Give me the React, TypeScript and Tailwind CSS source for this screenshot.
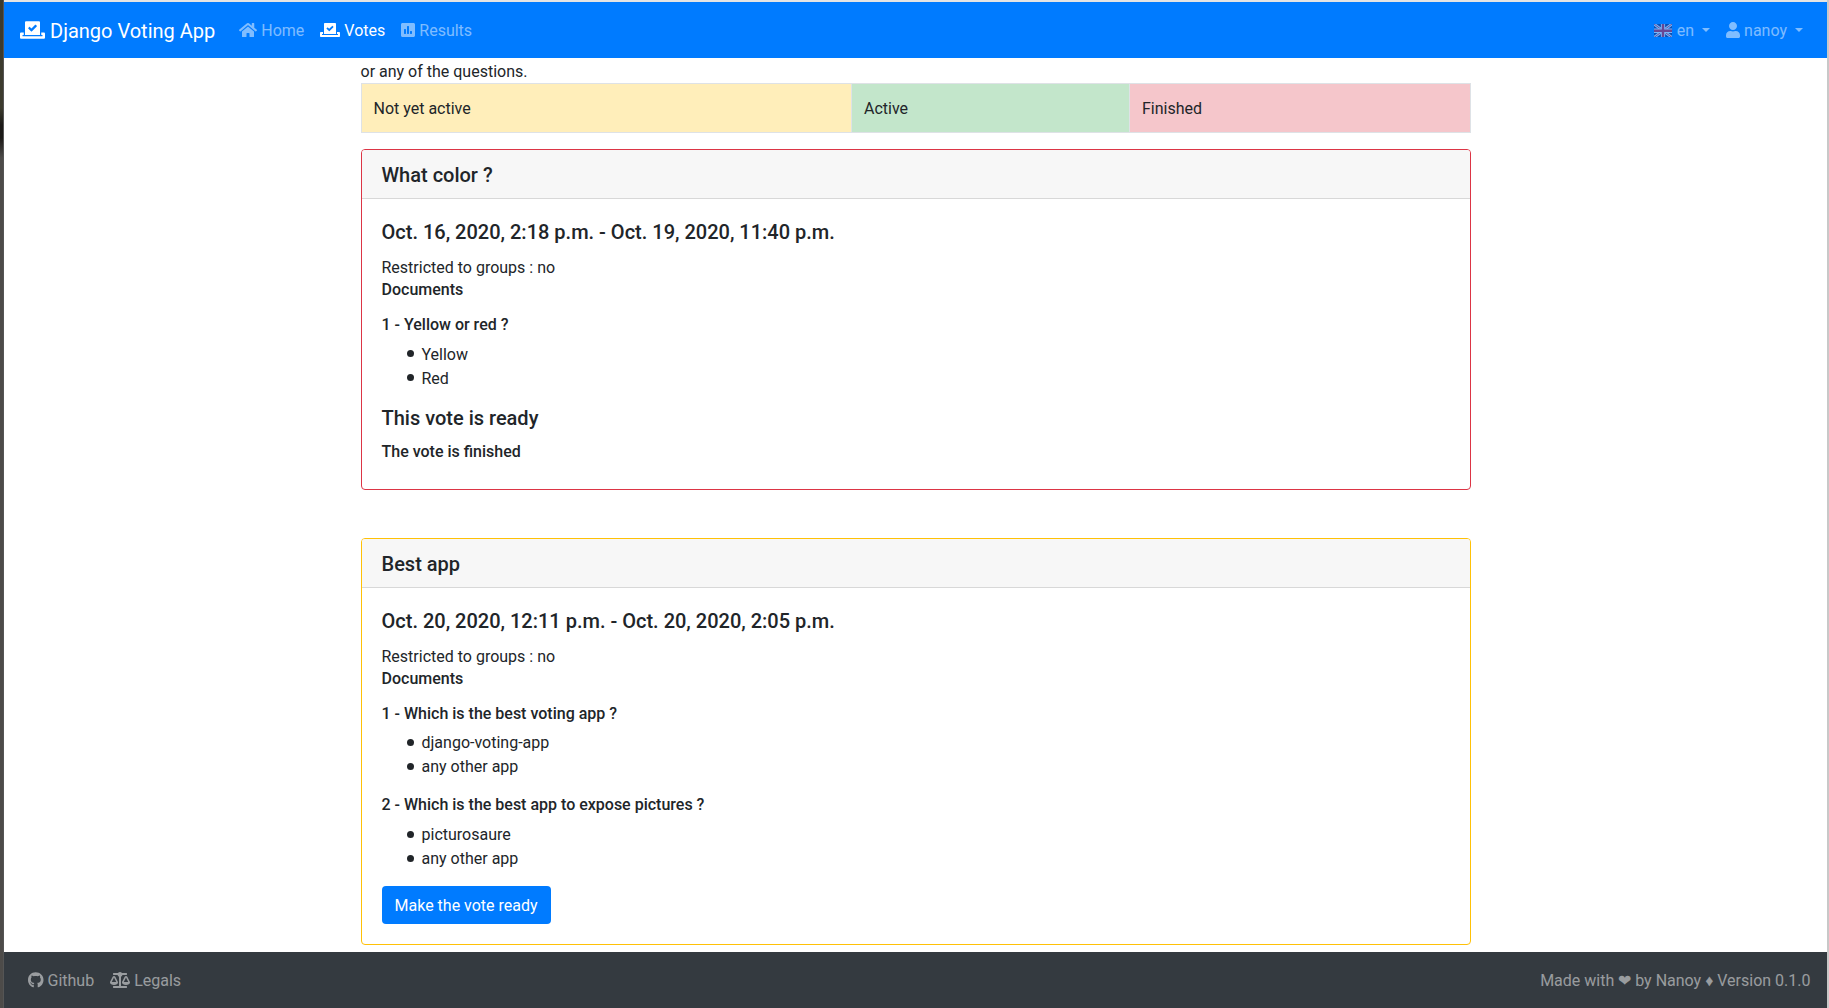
import type { ReactNode } from "react";
import { FaVoteYea, FaHome, FaPoll, FaUser, FaGithub, FaBalanceScale } from "react-icons/fa";

function Caret() {
  return (
    <span className="ml-2 h-0 w-0 border-x-[4.8px] border-t-[4.8px] border-x-transparent border-t-current" />
  );
}

function Flag() {
  return (
    <svg viewBox="0 0 60 44" className="mt-px mr-[5px] h-[13.5px] w-[18px] opacity-50" preserveAspectRatio="none">
      <rect width="60" height="44" fill="#15256b" />
      <path d="M0 0L60 44M60 0L0 44" stroke="#f1f1f1" strokeWidth="9" />
      <path d="M0 0L60 44M60 0L0 44" stroke="#d0142c" strokeWidth="3" />
      <path d="M30 0V44M0 22H60" stroke="#f1f1f1" strokeWidth="14" />
      <path d="M30 0V44M0 22H60" stroke="#d0142c" strokeWidth="8" />
    </svg>
  );
}

function Label({ children }: { children: ReactNode }) {
  return <span className="pt-0.5">{children}</span>;
}

function Navbar() {
  return (
    <nav className="flex h-14 shrink-0 items-center bg-[#007bff] px-4 text-white/50">
      <a className="mr-4 flex items-center text-xl text-white">
        <FaVoteYea className="mr-[5px] h-5 w-[25px]" />
        <Label>Django Voting App</Label>
      </a>
      <a className="flex items-center px-2">
        <FaHome className="mr-1 h-4 w-[18px]" />
        <Label>Home</Label>
      </a>
      <a className="flex items-center px-2 text-white">
        <FaVoteYea className="mr-1 h-4 w-5" />
        <Label>Votes</Label>
      </a>
      <a className="flex items-center px-2">
        <FaPoll className="mr-1 h-4 w-3.5" />
        <Label>Results</Label>
      </a>
      <a className="ml-auto flex items-center px-2">
        <Flag />
        <Label>en</Label>
        <Caret />
      </a>
      <a className="flex items-center px-2">
        <FaUser className="mr-1 h-4 w-3.5" />
        <Label>nanoy</Label>
        <Caret />
      </a>
    </nav>
  );
}

type Question = { title: string; answers: string[]; answerClass: string };

function VoteCard(props: {
  title: string;
  dates: string;
  border: string;
  questions: Question[];
  children: ReactNode;
}) {
  return (
    <section className={`rounded-[4px] border ${props.border}`}>
      <h5 className="rounded-t-[3px] border-b border-[#d8d8d8] bg-[#f7f7f7] px-5 pt-[13px] pb-[11px] text-xl leading-6 font-medium">
        {props.title}
      </h5>
      <div className="px-5 pt-[21px] pb-5">
        <h5 className="text-xl leading-6 font-medium">{props.dates}</h5>
        <p className="mt-3">Restricted to groups : no</p>
        <h6 className="mb-[15.4px] leading-[19.2px] font-medium">Documents</h6>
        {props.questions.map((q) => (
          <div key={q.title} className="mb-4">
            <h6 className="mb-2 leading-[19.2px] font-medium">{q.title}</h6>
            <ul>
              {q.answers.map((a) => (
                <li key={a} className="flex h-6 items-center pl-[25px]">
                  <span className="mr-2 h-[7px] w-[7px] rounded-full bg-current" />
                  <span className={q.answerClass}>{a}</span>
                </li>
              ))}
            </ul>
          </div>
        ))}
        {props.children}
      </div>
    </section>
  );
}

export default function App() {
  return (
    <div className="flex h-[1008px] w-[1829px] overflow-hidden bg-white font-[Roboto,sans-serif] text-base leading-6 text-[#212529]">
      <div className="w-1 shrink-0 border-r border-[#555] bg-[linear-gradient(to_bottom,#3c3b2e_0px,#3c3b2e_108px,#1c1a17_125px,#1c1a17_138px,#4d4b49_158px)]" />
      <div className="flex w-[1823px] shrink-0 flex-col border-t-2 border-[#e4e4e4]">
        <Navbar />
        <main className="ml-[356.5px] w-[1110px] flex-1 pt-px">
          <p className="h-6 pt-px">or any of the questions.</p>
          <div className="mb-4 grid grid-cols-[489.5px_278px_340.5px] border border-[#dee2e6]">
            <div className="bg-[#ffeeba] px-3 pt-[13px] pb-[11px]">Not yet active</div>
            <div className="border-l border-[#dee2e6] bg-[#c3e6cb] px-3 pt-[13px] pb-[11px]">Active</div>
            <div className="border-l border-[#dee2e6] bg-[#f5c6cb] px-3 pt-[13px] pb-[11px]">Finished</div>
          </div>
          <div className="flex flex-col gap-12">
            <VoteCard
              title="What color ?"
              dates="Oct. 16, 2020, 2:18 p.m. - Oct. 19, 2020, 11:40 p.m."
              border="border-[#dc3545]"
              questions={[{ title: "1 - Yellow or red ?", answers: ["Yellow", "Red"], answerClass: "pt-0.5" }]}
            >
              <h5 className="mb-3 text-xl leading-6 font-medium">This vote is ready</h5>
              <h6 className="mb-2 leading-[19.2px] font-medium">The vote is finished</h6>
            </VoteCard>
            <VoteCard
              title="Best app"
              dates="Oct. 20, 2020, 12:11 p.m. - Oct. 20, 2020, 2:05 p.m."
              border="border-[#ffc107]"
              questions={[
                {
                  title: "1 - Which is the best voting app ?",
                  answers: ["django-voting-app", "any other app"],
                  answerClass: "pt-0",
                },
                {
                  title: "2 - Which is the best app to expose pictures ?",
                  answers: ["picturosaure", "any other app"],
                  answerClass: "pt-0.5",
                },
              ]}
            >
              <button className="block h-[38px] rounded-[4px] bg-[#007bff] px-[13px] pt-0.5 text-white">
                Make the vote ready
              </button>
            </VoteCard>
          </div>
        </main>
        <footer className="flex h-14 shrink-0 items-center bg-[#343a40] pr-[16.5px] pl-6 text-white/50">
          <a className="mr-4 flex items-center">
            <FaGithub className="mr-1 h-4 w-[15.5px]" />
            <Label>Github</Label>
          </a>
          <a className="flex items-center">
            <FaBalanceScale className="mr-1 h-4 w-5" />
            <Label>Legals</Label>
          </a>
          <span className="ml-auto pt-0.5">Made with ❤ by Nanoy ♦ Version 0.1.0</span>
        </footer>
      </div>
      <div className="flex-1 bg-[#c8c8c8]" />
    </div>
  );
}
